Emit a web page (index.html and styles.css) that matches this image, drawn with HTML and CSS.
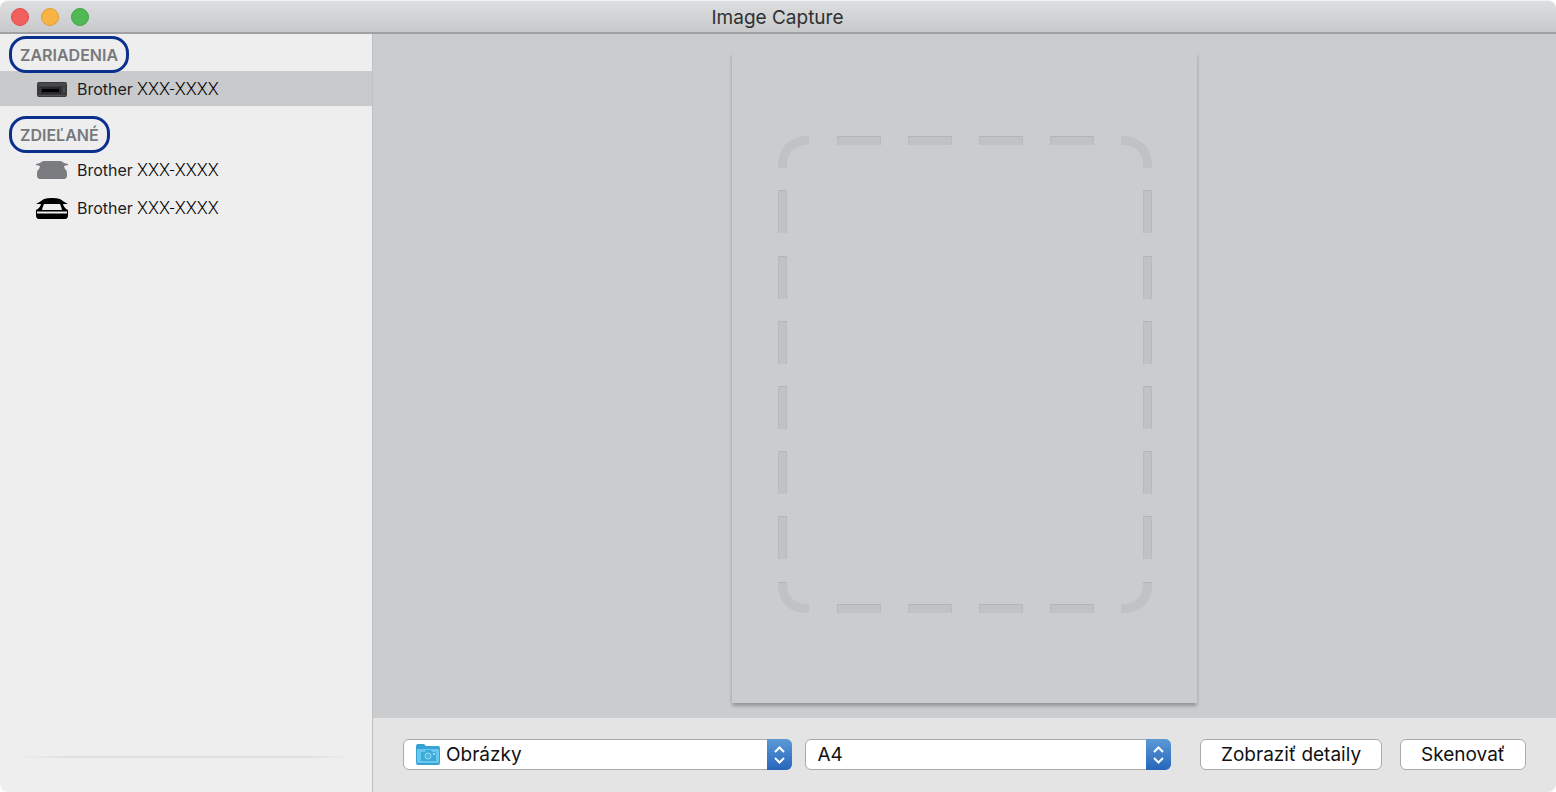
FILE: index.html
```html
<!DOCTYPE html>
<html lang="sk">

<head>
    <meta charset="utf-8">
    <title>Image Capture</title>
    <link rel="stylesheet" href="styles.css">
</head>

<body>
    <div class="window">
        <header class="titlebar">
            <div class="lights">
                <button class="light red" aria-label="Zavrieť"></button>
                <button class="light yellow" aria-label="Minimalizovať"></button>
                <button class="light green" aria-label="Zväčšiť"></button>
            </div>
            <h1 class="title">Image Capture</h1>
        </header>

        <div class="content">
            <nav class="sidebar">
                <h2 class="heading">ZARIADENIA</h2>
                <ul class="devices">
                    <li class="device selected">
                        <svg class="device-icon" viewBox="0 0 32 24">
                            <rect x="1" y="5" width="30" height="15" rx="2" fill="#39393b" />
                            <rect x="2" y="6" width="28" height="3" fill="#48494b" />
                            <rect x="5" y="10" width="20" height="7" fill="#29292b" />
                            <rect x="6" y="12" width="17" height="3" fill="#000" />
                            <rect x="27" y="10" width="2" height="5" fill="#4c4d50" />
                            <rect x="2" y="18" width="28" height="1" fill="#505154" />
                        </svg>
                        <span class="brand">Brother</span><span class="model">XXX-XXXX</span>
                    </li>
                </ul>

                <h2 class="heading">ZDIEĽANÉ</h2>
                <ul class="devices shared">
                    <li class="device">
                        <svg class="device-icon" viewBox="0 0 32 24" fill="#7b7c80">
                            <path d="M8 3h16q2 0 4 2l4 1v1l-4 1q.5 3 2 4 1 1 1 3v2q0 4-3 4H4q-3 0-3-4v-2q0-2 1-3 1.500-1 2-4L0 7V6l4-1q2-2 4-2z" />
                        </svg>
                        <span class="brand">Brother</span><span class="model">XXX-XXXX</span>
                    </li>
                    <li class="device">
                        <svg class="device-icon" viewBox="0 0 32 24">
                            <path d="M0 8q4-2 8-5 3-1 8-1t8 1q4 3 8 5H0z" fill="#000" />
                            <path d="M5 8h22q1 4 5 6v5q0 4-3 4H3q-3 0-3-4v-5q4-2 5-6z" fill="#000" />
                            <path d="M8 8h16q1 2 2 6H6q1-4 2-6z" fill="#eee" />
                            <path d="M1 16.500h30" stroke="#eee" stroke-width="2" />
                        </svg>
                        <span class="brand">Brother</span><span class="model">XXX-XXXX</span>
                    </li>
                </ul>
                <hr class="divider">
            </nav>

            <main class="main">
                <div class="preview">
                    <div class="sheet">
                        <svg class="outline" viewBox="0 0 374 477">
                            <g fill="#c1c2c4">
                                <path d="M0 32V27Q2 3 27 0h4v9h-4Q11 11 9 27v5z" />
                                <path d="M343 0h4q25 3 27 27v5h-9v-5Q363 11 347 9h-4z" />
                                <path d="M0 446h9v5q2 15 18 17h4v9h-4Q2 475 0 451z" />
                                <path d="M365 446h9v5q-2 24-27 26h-4v-9h4q16-2 18-17z" />
                                <path d="M59 0h44v9H59zM130 0h44v9h-44zM201 0h44v9h-44zM272 0h44v9h-44z" />
                                <path d="M59 468h44v9H59zM130 468h44v9h-44zM201 468h44v9h-44zM272 468h44v9h-44z" />
                                <path d="M0 54h9v43H0zM0 120h9v43H0zM0 185h9v43H0zM0 250h9v43H0zM0 315h9v43H0zM0 380h9v43H0z" />
                                <path d="M365 54h9v43h-9zM365 120h9v43h-9zM365 185h9v43h-9zM365 250h9v43h-9zM365 315h9v43h-9zM365 380h9v43h-9z" />
                            </g>
                            <!-- darker upper edges -->
                            <g fill="#b3b4b6">
                                <path d="M59 0h44v1H59zM130 0h44v1h-44zM201 0h44v1h-44zM272 0h44v1h-44z" />
                                <path d="M59 468h44v1H59zM130 468h44v1h-44zM201 468h44v1h-44zM272 468h44v1h-44z" />
                                <path d="M0 54h9v1H0zM0 120h9v1H0zM0 185h9v1H0zM0 250h9v1H0zM0 315h9v1H0zM0 380h9v1H0zM0 446h9v1H0z" />
                                <path d="M365 54h9v1h-9zM365 120h9v1h-9zM365 185h9v1h-9zM365 250h9v1h-9zM365 315h9v1h-9zM365 380h9v1h-9zM365 446h9v1h-9z" />
                            </g>
                            <!-- side edges -->
                            <g fill="none" stroke="#b9babc">
                                <path d="M59.500 0v9M102.500 0v9M130.500 0v9M173.500 0v9M201.500 0v9M244.500 0v9M272.500 0v9M315.500 0v9" />
                                <path d="M59.500 468v9M102.500 468v9M130.500 468v9M173.500 468v9M201.500 468v9M244.500 468v9M272.500 468v9M315.500 468v9" />
                                <path d="M.5 54v43M.5 120v43M.5 185v43M.5 250v43M.5 315v43M.5 380v43M8.500 54v43M8.500 120v43M8.500 185v43M8.500 250v43M8.500 315v43M8.500 380v43" />
                                <path d="M365.500 54v43M365.500 120v43M365.500 185v43M365.500 250v43M365.500 315v43M365.500 380v43M373.500 54v43M373.500 120v43M373.500 185v43M373.500 250v43M373.500 315v43M373.500 380v43" />
                            </g>
                        </svg>
                    </div>
                </div>

                <footer class="toolbar">
                    <div class="popup folder">
                        <select aria-label="Skenovať do">
                            <option>Obrázky</option>
                        </select>
                        <svg class="folder-icon" viewBox="0 0 24 22">
                            <path d="M0 2q0-2 2-2h6l2 2h12q2 0 2 2v15q0 2-2 2H2q-2 0-2-2z" fill="#38a3d2" />
                            <path d="M1 5h22v14H1z" fill="#67c8ef" />
                            <path d="M5 8h4l1-2h5l1 2h4v9H5z" fill="#3fa9d8" />
                            <circle cx="12" cy="12" r="3" fill="#4bb4e0" stroke="#91def8" />
                            <path d="M17 9h2v2h-2z" fill="#91def8" />
                        </svg>
                        <svg class="arrows" viewBox="0 0 25 31">
                            <path d="M8 13l4.500-4.500L17 13M8 19l4.500 4.500L17 19" />
                        </svg>
                    </div>
                    <div class="popup size">
                        <select aria-label="Veľkosť">
                            <option>A4</option>
                        </select>
                        <svg class="arrows" viewBox="0 0 25 31">
                            <path d="M8 13l4.500-4.500L17 13M8 19l4.500 4.500L17 19" />
                        </svg>
                    </div>
                    <div class="actions">
                        <button class="button">Zobraziť detaily</button>
                        <button class="button">Skenovať</button>
                    </div>
                </footer>
            </main>
        </div>
    </div>
</body>

</html>
```
FILE: styles.css
```css
* {
    box-sizing: border-box;
}

body {
    margin: 0;
    background-color: #ffffff;
    font-family: Inter, "Liberation Sans", sans-serif;
    color: #1d1d1f;
}

.window {
    display: flex;
    flex-direction: column;
    height: 100vh;
    border-top: 1px solid #f2f2f2;
    border-radius: 8px;
    overflow: hidden;
}

.titlebar {
    display: grid;
    grid-template-columns: 1fr auto 1fr;
    align-items: center;
    height: 33px;
    padding: 1px 12px 0 11px;
    background: linear-gradient(#dddedf, #c8c9ca);
    border-bottom: 2px solid #a0a1a4;
}

.lights {
    display: flex;
    gap: 12px;
}

.light {
    width: 18px;
    height: 18px;
    padding: 0;
    border: 1px solid;
    border-radius: 50%;
}

.red {
    background-color: #f2605e;
    border-color: #dc4b4c;
}

.yellow {
    background-color: #f7b445;
    border-color: #dd9c37;
}

.green {
    background-color: #50b955;
    border-color: #3ea545;
}

.title {
    margin: 0;
    padding-top: 2px;
    font-size: 19px;
    font-weight: 400;
    line-height: 24px;
    color: #2f3032;
}

.content {
    display: flex;
    flex: 1;
    min-height: 0;
}

.sidebar {
    display: flex;
    flex-direction: column;
    align-items: flex-start;
    flex: 0 0 373px;
    padding-top: 2px;
    background-color: #eeeeee;
    border-right: 1px solid #bfc0c2;
}

/* the ring overlaps the row below it */
.heading {
    position: relative;
    margin: 0 0 -2px 9px;
    padding: 0 8px;
    height: 37px;
    border: 3px solid #0b308e;
    border-radius: 17px;
    font-size: 16px;
    font-weight: 600;
    line-height: 32px;
    color: #77787b;
}

.devices {
    align-self: stretch;
    margin: 0 0 10px;
    padding: 0;
    list-style: none;
}

.device {
    display: flex;
    align-items: center;
    height: 35px;
    padding-left: 36px;
    font-size: 16px;
}

.selected {
    background-color: #c9cacc;
}

.shared .device {
    height: 38px;
}

.device-icon {
    width: 32px;
    height: 24px;
    margin-right: 9px;
}

.model {
    margin-left: 4px;
    font-family: Roboto, sans-serif;
    font-size: 18px;
    font-weight: 300;
    line-height: 20px;
    color: #000000;
}

.divider {
    width: 336px;
    height: 2px;
    margin: auto 18px 34px;
    border: 0;
    background: linear-gradient(to right, #eeeeee, #dedfdf 15%, #dedfdf 85%, #eeeeee);
}

.main {
    display: flex;
    flex-direction: column;
    flex: 1;
    min-width: 0;
}

.preview {
    display: flex;
    justify-content: center;
    flex: 1;
    min-height: 0;
    padding: 18px 0 15px;
    background-color: #cbccce;
}

.sheet {
    display: flex;
    align-items: center;
    justify-content: center;
    height: 100%;
    aspect-ratio: 465 / 651;
    padding-bottom: 6px;
    box-shadow: 0 3px 4px -1px #8f9093, 0 3px 3px #b4b5b7;
    background-color: #cbccce;
}

.outline {
    width: 374px;
    max-width: 81%;
}

.toolbar {
    display: flex;
    align-items: center;
    height: 74px;
    padding: 0 30px 2px;
    background-color: #e4e4e4;
}

.popup {
    position: relative;
    min-width: 0;
}

.folder {
    flex: 389 1 0;
    margin-right: 13px;
}

.size {
    flex: 367 1 0;
    margin-right: 29px;
}

.popup select,
.button {
    height: 31px;
    border: 1px solid #a9aaad;
    border-radius: 6px;
    background-color: #ffffff;
    font-family: inherit;
    font-size: 19px;
    line-height: 27px;
    color: #111112;
}

.popup select {
    display: block;
    width: 100%;
    padding: 0 36px 0 12px;
    appearance: none;
}

.folder select {
    padding-left: 42px;
}

.folder-icon {
    position: absolute;
    top: 5px;
    left: 13px;
    width: 24px;
    height: 22px;
    pointer-events: none;
}

.arrows {
    position: absolute;
    top: 0;
    right: 0;
    width: 25px;
    height: 31px;
    border-radius: 0 6px 6px 0;
    background: linear-gradient(#5b9ad6, #2766bb);
    fill: none;
    stroke: #ffffff;
    stroke-width: 2;
    pointer-events: none;
}

.actions {
    display: flex;
    gap: 18px;
}

.button {
    padding: 0 20px;
    white-space: nowrap;
}
```
